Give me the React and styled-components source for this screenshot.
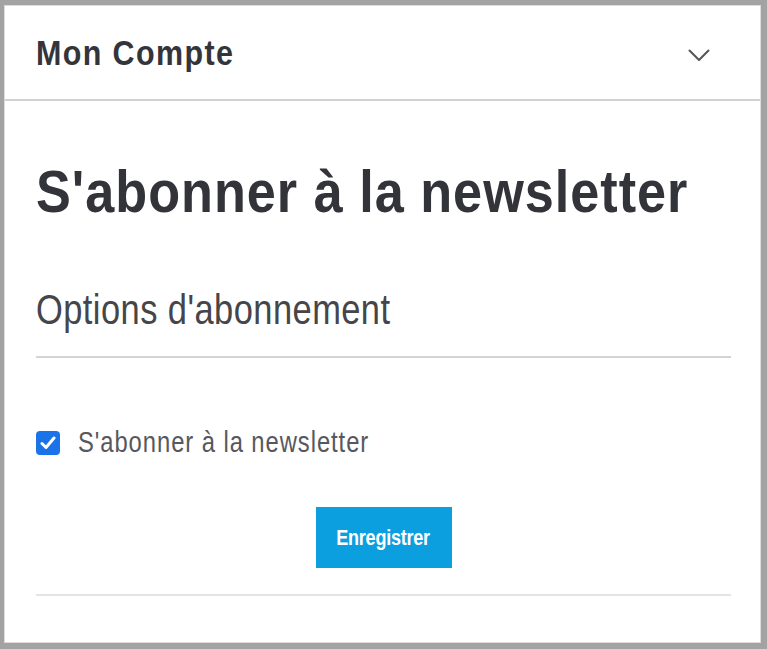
import React from "react";
import styled, { createGlobalStyle } from "styled-components";

const Global = createGlobalStyle`
  html, body { margin: 0; padding: 0; background: #a3a3a3; }
  body { font-family: "Liberation Sans", Arial, sans-serif; }
  #root { min-height: 649px; display: flex; }
`;

/* condensed look: Liberation Sans narrowed horizontally */
const Narrow = styled.span`
  display: inline-block;
  white-space: nowrap;
  transform: scaleX(${(p) => p.$scale || 0.82});
  transform-origin: ${(p) => (p.$center ? "center" : "left")} center;
`;

const Frame = styled.div`
  flex: 1;
  margin: 5px 6px 6px 4px;
  height: 638px;
  box-sizing: border-box;
  background: #ffffff;
  border: 1px solid #dcdcdc;
  display: flex;
  flex-direction: column;
  overflow: hidden;
`;

const Header = styled.div`
  height: 93px;
  flex-shrink: 0;
  display: flex;
  align-items: center;
  justify-content: space-between;
  padding: 0 50px 0 31px;
  border-bottom: 2px solid #d2d2d2;
`;

const HeaderTitle = styled.h2`
  margin: 0;
  font-size: 35px;
  line-height: 1;
  font-weight: 700;
  letter-spacing: 1.6px;
  color: #34343b;
`;

const Chevron = styled.svg`
  width: 22px;
  height: 13px;
  display: block;
  margin-top: 5px;
`;

const Content = styled.div`
  display: flex;
  flex-direction: column;
  padding: 0 29px 0 31px;
`;

const Title = styled.h1`
  margin: 61px 0 0;
  font-size: 60px;
  line-height: 1;
  font-weight: 700;
  letter-spacing: 1.15px;
  color: #33333a;
`;

const SectionTitle = styled.h3`
  margin: 67px 0 0;
  padding-bottom: 25px;
  border-bottom: 2px solid #d4d4d4;
  font-size: 42px;
  line-height: 1;
  font-weight: 400;
  letter-spacing: 0.55px;
  color: #45454a;
`;

const CheckRow = styled.label`
  margin-top: 70px;
  display: flex;
  align-items: center;
  gap: 18px;
  cursor: pointer;
`;

const HiddenInput = styled.input`
  position: absolute;
  opacity: 0;
  width: 0;
  height: 0;
`;

const Box = styled.span`
  flex-shrink: 0;
  width: 24px;
  height: 24px;
  border-radius: 4px;
  background: ${(p) => (p.$checked ? "#1a73e8" : "#fff")};
  border: ${(p) => (p.$checked ? "none" : "2px solid #767676")};
  display: flex;
  align-items: center;
  justify-content: center;
  box-sizing: border-box;
`;

const LabelText = styled.span`
  font-size: 29px;
  line-height: 1;
  letter-spacing: 1.15px;
  color: #58585c;
`;

const ButtonRow = styled.div`
  display: flex;
  justify-content: center;
  margin-top: 50px;
`;

const SaveButton = styled.button`
  width: 136px;
  height: 61px;
  padding: 0;
  border: none;
  border-radius: 0;
  background: #0c9fe0;
  color: #ffffff;
  font-family: inherit;
  font-size: 22px;
  font-weight: 700;
  letter-spacing: -0.3px;
  cursor: pointer;
  display: flex;
  align-items: center;
  justify-content: center;
`;

const Divider = styled.hr`
  margin: 26px 0 0;
  border: none;
  border-top: 2px solid #e4e4e4;
`;

export default function App() {
  const [checked, setChecked] = React.useState(true);
  return (
    <>
      <Global />
      <Frame>
        <Header>
          <HeaderTitle>
            <Narrow $scale={0.87}>Mon Compte</Narrow>
          </HeaderTitle>
          <Chevron viewBox="0 0 22 13" fill="none">
            <path d="M1.5 1.5 L11 11 L20.5 1.5" stroke="#555559" strokeWidth="2" strokeLinecap="round" strokeLinejoin="round" />
          </Chevron>
        </Header>
        <Content>
          <Title>
            <Narrow $scale={0.87}>S'abonner à la newsletter</Narrow>
          </Title>
          <SectionTitle>
            <Narrow>Options d'abonnement</Narrow>
          </SectionTitle>
          <CheckRow>
            <HiddenInput type="checkbox" checked={checked} onChange={(e) => setChecked(e.target.checked)} />
            <Box $checked={checked}>
              {checked && (
                <svg width="16" height="14" viewBox="0 0 16 14" fill="none">
                  <path d="M2 7.5 L6 11.5 L14 2" stroke="#fff" strokeWidth="3" strokeLinecap="round" strokeLinejoin="round" />
                </svg>
              )}
            </Box>
            <LabelText>
              <Narrow>S'abonner à la newsletter</Narrow>
            </LabelText>
          </CheckRow>
          <ButtonRow>
            <SaveButton type="button">
              <Narrow $center>Enregistrer</Narrow>
            </SaveButton>
          </ButtonRow>
          <Divider />
        </Content>
      </Frame>
    </>
  );
}
